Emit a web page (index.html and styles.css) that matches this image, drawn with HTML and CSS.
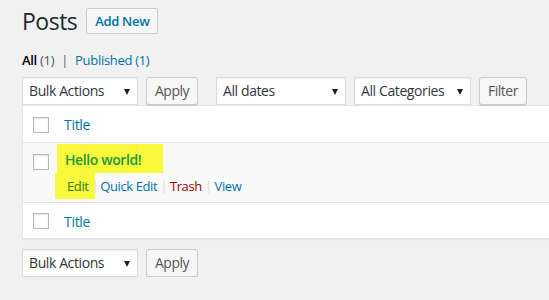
FILE: index.html
```html
<!DOCTYPE html>
<html lang="en">
<head>
    <meta charset="UTF-8">
    <title>Posts</title>
    <link rel="stylesheet" href="styles.css">
</head>
<body>
    <div class="wrap">
        <div class="page-head">
            <h1 class="page-title">Posts</h1>
            <a class="page-title-action">Add New</a>
        </div>

        <ul class="subsubsub">
            <li><span class="current">All</span> <span class="count">(1)</span></li>
            <li class="sep">|</li>
            <li><a>Published <span class="count">(1)</span></a></li>
        </ul>

        <!-- top filters -->
        <div class="tablenav">
            <div class="select select-bulk">Bulk Actions <span class="arrow"></span></div>
            <button class="button">Apply</button>
            <div class="select select-dates">All dates <span class="arrow"></span></div>
            <div class="select select-cats">All Categories <span class="arrow"></span></div>
            <button class="button">Filter</button>
        </div>

        <div class="posts-table">
            <div class="row row-head">
                <span class="check"></span>
                <a class="col-title">Title</a>
            </div>
            <div class="row row-post">
                <span class="check"></span>
                <div class="post-cell">
                    <a class="post-title"><span class="mark mark-title">Hello world!</span></a>
                    <div class="row-actions">
                        <span class="mark mark-edit"><a class="act-edit">Edit</a></span><span class="sep sep-first">|</span>
                        <a>Quick Edit</a><span class="sep">|</span>
                        <a class="trash">Trash</a><span class="sep">|</span>
                        <a>View</a>
                    </div>
                </div>
            </div>
            <div class="row row-foot">
                <span class="check"></span>
                <a class="col-title">Title</a>
            </div>
        </div>

        <!-- bottom bulk actions -->
        <div class="tablenav tablenav-bottom">
            <div class="select select-bulk">Bulk Actions <span class="arrow"></span></div>
            <button class="button">Apply</button>
        </div>
    </div>
</body>
</html>
```

FILE: styles.css
```css
* {
    margin: 0;
    padding: 0;
    box-sizing: border-box;
}

body {
    font-family: 'Segoe UI', 'Open Sans', sans-serif;
    background-color: #f1f1f1;
    color: #444;
    font-size: 13px;
    overflow: hidden;
}

a {
    color: #0073aa;
    text-decoration: none;
}

.wrap {
    padding-left: 22px;
    width: 600px;
}

/* Title + Add New */
.page-head {
    display: flex;
    align-items: center;
    height: 43px;
    padding-bottom: 1px;
}

.page-title {
    font-size: 23px;
    font-weight: 400;
    color: #23282d;
    letter-spacing: -0.5px;
}

.page-title-action {
    margin-left: 9px;
    height: 26px;
    width: 72px;
    display: flex;
    align-items: center;
    justify-content: center;
    border: 1px solid #ccc;
    border-radius: 2px;
    background-color: #f7f7f7;
    font-size: 13px;
    font-weight: 600;
    letter-spacing: -0.3px;
}

/* Views */
.subsubsub {
    list-style: none;
    display: flex;
    gap: 5px;
    height: 33px;
    padding-top: 8px;
    font-size: 13px;
    letter-spacing: -0.3px;
}

.subsubsub .current {
    color: #000;
    font-weight: 600;
}

.subsubsub .count {
    color: #555;
    font-weight: 400;
}

.subsubsub .sep {
    color: #666;
    margin: 0 2px;
}

.subsubsub a .count {
    color: #0073aa;
}

/* Filters row */
.tablenav {
    display: flex;
    align-items: center;
    height: 29px;
    gap: 8px;
}

.select {
    height: 28px;
    background-color: #fff;
    border: 1px solid #ddd;
    box-shadow: inset 0 1px 2px rgba(0, 0, 0, 0.07);
    color: #32373c;
    font-size: 14px;
    letter-spacing: -0.4px;
    padding-left: 6px;
    display: flex;
    align-items: center;
    position: relative;
}

.select .arrow {
    position: absolute;
    right: 7px;
    top: 11px;
    border-left: 3.5px solid transparent;
    border-right: 3.5px solid transparent;
    border-top: 6px solid #222;
}

.select-bulk {
    width: 116px;
}

.select-dates {
    width: 130px;
    margin-left: 10px;
}

.select-cats {
    width: 117px;
}

.button {
    height: 28px;
    padding: 0 8px 1px;
    font-family: inherit;
    font-size: 14px;
    letter-spacing: -0.5px;
    color: #555;
    background-color: #f7f7f7;
    border: 1px solid #ccc;
    border-radius: 3px;
    box-shadow: 0 1px 0 #ccc;
}

/* Table */
.posts-table {
    background-color: #fff;
    border: 1px solid #e5e5e5;
    box-shadow: 0 1px 1px rgba(0, 0, 0, 0.04);
}

.row {
    display: flex;
    align-items: center;
    padding-left: 10px;
}

.row-head {
    height: 37px;
    padding-top: 1px;
    border-bottom: 1px solid #e1e1e1;
}

.row-post {
    height: 60px;
    align-items: flex-start;
    background-color: #f9f9f9;
    border-bottom: 1px solid #e1e1e1;
}

.row-foot {
    height: 35px;
    padding-top: 1px;
}

.check {
    width: 16px;
    height: 16px;
    border: 1px solid #b4b9be;
    background-color: #fff;
    box-shadow: inset 0 1px 2px rgba(0, 0, 0, 0.1);
}

.row-post .check {
    margin-top: 11px;
}

.col-title {
    margin-left: 15px;
    font-size: 14px;
    letter-spacing: -0.3px;
}

.post-cell {
    margin-left: 8px;
    padding-top: 1px;
}

.mark {
    background-color: #f8f83c;
}

.mark-title {
    display: inline-block;
    height: 29px;
    width: 106px;
    padding: 6px 0 0 8px;
    color: #1e9a3a;
    font-size: 14px;
    font-weight: 600;
    letter-spacing: -0.4px;
}

.row-actions {
    display: flex;
    align-items: center;
    font-size: 13px;
    letter-spacing: -0.4px;
    margin-left: -2px;
}

.mark-edit {
    display: inline-block;
    height: 26px;
    padding: 4px 6px 0 12px;
}

.act-edit {
    color: #2f7a1c;
}

.row-actions .sep {
    color: #ddd;
    margin: 0 3px;
}

.row-actions .sep-first {
    margin: 0 2px 0 -3px;
}

.trash {
    color: #a00;
}

.tablenav-bottom {
    margin-top: 9px;
}
```
